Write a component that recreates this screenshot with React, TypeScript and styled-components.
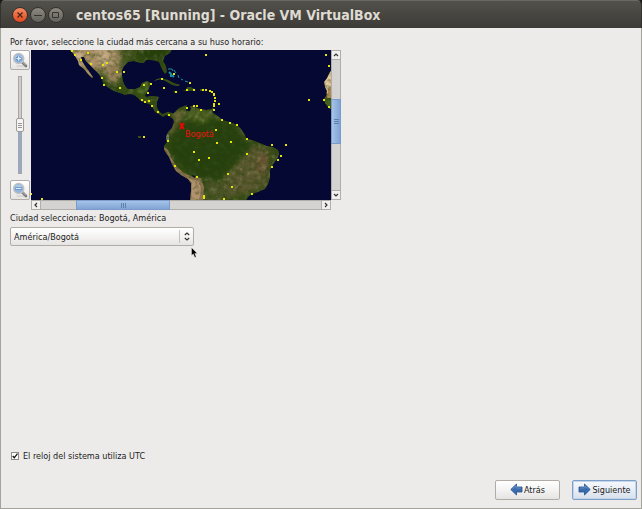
import React, { useState } from "react";
import styled, { createGlobalStyle, css } from "styled-components";

const GlobalStyle = createGlobalStyle`
  * { box-sizing: border-box; }
  body {
    margin: 0;
    background: #edebea;
    color: #1c1c1c;
    font: 9px/12px "DejaVu Sans Condensed", "DejaVu Sans", sans-serif;
  }
  button, input, select { font: inherit; color: inherit; margin: 0; }
`;

const Window = styled.div`
  min-height: 100vh;
  display: flex;
  flex-direction: column;
  background: #1a1917;
`;

const TitleBar = styled.header`
  height: 28px;
  display: flex;
  align-items: center;
  gap: 2px;
  padding: 0 11px;
  border: 1px solid #33322e;
  border-top-color: #6a6861;
  border-bottom: 0;
  border-radius: 5px 5px 0 0;
  background: linear-gradient(#53514b, #3c3b37);
`;

const WindowButton = styled.button<{ $close?: boolean }>`
  width: 16px;
  height: 16px;
  padding: 0;
  border: 1px solid #33322e;
  border-radius: 50%;
  display: grid;
  place-items: center;
  background: ${(p) =>
    p.$close
      ? "linear-gradient(#f58a63, #e0491d)"
      : "linear-gradient(#8b8980, #64625b)"};
  svg { display: block; }
`;

const Title = styled.h1`
  margin: 0 0 0 10px;
  color: #dfdbd2;
  font: bold 14px/20px "DejaVu Sans Condensed", "DejaVu Sans", sans-serif;
  white-space: nowrap;
`;

const Body = styled.main`
  flex: 1;
  display: flex;
  flex-direction: column;
  align-items: flex-start;
  padding: 8px 4px 8px 9px;
  border: 1px solid #a5a19b;
  border-top: 0;
  background: #edebea;
`;

const Caption = styled.p`
  margin: 0;
`;

const MapPanel = styled.section`
  display: grid;
  grid-template-columns: 20px auto;
  gap: 1px;
  margin: 2px 0;
`;

const ZoomColumn = styled.div`
  display: flex;
  flex-direction: column;
  align-items: center;
  justify-content: space-between;
  height: 150px;
`;

const buttonFace = css`
  border: 1px solid #b1aca6;
  border-radius: 2px;
  background: linear-gradient(#ffffff, #f4f3f2 50%, #e6e4e2);
`;

const ZoomButton = styled.button`
  ${buttonFace}
  width: 20px;
  height: 20px;
  padding: 0;
  display: grid;
  place-items: center;
`;

const ZoomSlider = styled.input`
  writing-mode: vertical-lr;
  direction: rtl;
  appearance: none;
  width: 10px;
  height: 98px;
  background: transparent;
  &::-webkit-slider-runnable-track {
    width: 4px;
    height: 100%;
    border: 1px solid #a9a6a2;
    background: linear-gradient(#cfcdcb 50%, #8cacd6 50%);
  }
  &::-webkit-slider-thumb {
    appearance: none;
    width: 8px;
    height: 14px;
    margin-left: -3px;
    border: 1px solid #a09c97;
    border-radius: 2px;
    background:
      linear-gradient(#999 1px, transparent 1px 2px, #999 2px 3px, transparent 3px 4px, #999 4px) center / 4px 5px no-repeat,
      #f6f5f4;
  }
`;

const MapFrame = styled.div`
  display: grid;
  grid-template-columns: 300px 10px;
  grid-template-rows: 150px 10px;
`;

const MapCanvas = styled.svg`
  display: block;
  width: 300px;
  height: 150px;
  background: #040833;
`;

const ScrollBar = styled.div<{ $vertical?: boolean }>`
  display: flex;
  flex-direction: ${(p) => (p.$vertical ? "column" : "row")};
  border: 1px solid #b1aeaa;
  border-radius: 2px;
  background: #d5d3d1;
`;

const ScrollArrow = styled.button`
  flex: 0 0 8px;
  min-width: 8px;
  padding: 0;
  border: 0;
  display: grid;
  place-items: center;
  background: #f1f0ef;
  box-shadow: 0 0 0 1px #b1aeaa;
`;

const ScrollGap = styled.div<{ $grow: number }>`
  flex: ${(p) => p.$grow} 1 0;
`;

const ScrollThumb = styled.div<{ $grow: number; $vertical?: boolean }>`
  flex: ${(p) => p.$grow} 1 0;
  display: grid;
  place-items: center;
  background: linear-gradient(${(p) => (p.$vertical ? "to right, " : "")}#a6c3e8, #80a4d4);
  box-shadow: 0 0 0 1px #7b9ccb;
`;

const Grip = styled.span<{ $vertical?: boolean }>`
  width: 5px;
  height: 5px;
  background: repeating-linear-gradient(
    ${(p) => (p.$vertical ? "to bottom" : "to right")},
    #5c80b1 0 1px, transparent 1px 2px
  );
`;

const SelectBox = styled.div`
  display: grid;
  width: 184px;
  margin-top: 3px;
  align-items: center;
  > * { grid-area: 1 / 1; }
`;

const CitySelect = styled.select`
  ${buttonFace}
  appearance: none;
  width: 100%;
  height: 19px;
  padding: 0 18px 0 3px;
`;

const SelectArrows = styled.span`
  justify-self: end;
  display: grid;
  place-items: center;
  width: 15px;
  height: 13px;
  border-left: 1px solid #c4c1bd;
  pointer-events: none;
`;

const UtcLabel = styled.label`
  display: flex;
  align-items: center;
  gap: 4px;
  margin: auto 0 18px 1px;
`;

const UtcBox = styled.input`
  appearance: none;
  width: 8px;
  height: 8px;
  border: 1px solid #8f8c88;
  background: #fff;
  &:checked {
    background: #fff url("data:image/svg+xml,%3Csvg xmlns='http://www.w3.org/2000/svg' viewBox='0 0 6 6'%3E%3Cpath d='M.7 3l1.6 1.8L5.5.6' fill='none' stroke='%23111' stroke-width='1.3'/%3E%3C/svg%3E") center / 6px 6px no-repeat;
  }
`;

const Footer = styled.footer`
  align-self: stretch;
  display: flex;
  justify-content: flex-end;
  gap: 12px;
`;

const NavButton = styled.button<{ $primary?: boolean }>`
  ${buttonFace}
  width: 65px;
  height: 20px;
  padding: 0 0 1px;
  display: flex;
  align-items: center;
  justify-content: center;
  gap: 1px;
  ${(p) =>
    p.$primary &&
    css`
      border-color: #7d9fc9;
      background: linear-gradient(#f5f8fc, #e9eef5 50%, #d6dfeb);
      box-shadow: inset 0 0 0 1px #c5d5e9;
    `}
`;

const Pointer = styled.svg`
  position: absolute;
  left: 191px;
  top: 247px;
  pointer-events: none;
`;

const cities: [number, number][] = [
  [71, 51], [74, 55], [80, 60], [87, 53], [90, 64], [102, 65], [106, 63], [116, 72],
  [123, 72], [101, 78], [103, 85], [119, 88], [143, 85], [150, 84], [147, 93], [161, 79],
  [173, 74], [189, 83], [163, 88], [175, 92], [186, 90], [193, 90], [202, 90], [205, 90],
  [209, 91], [211, 92], [213, 94], [213, 95], [214, 98], [214, 101], [213, 104], [213, 106],
  [213, 110], [218, 104], [205, 55], [141, 100], [144, 102], [148, 101], [151, 106],
  [157, 112], [168, 115], [186, 108], [193, 106], [196, 106], [200, 110], [221, 120],
  [229, 123], [236, 125], [215, 130], [216, 143], [230, 142], [246, 139], [193, 152],
  [198, 160], [208, 158], [246, 154], [271, 145], [285, 145], [280, 156], [277, 160],
  [271, 167], [174, 166], [196, 177], [227, 174], [231, 187], [251, 194], [203, 196],
  [203, 198], [223, 199], [167, 141], [325, 55], [328, 66], [308, 100], [323, 100],
  [328, 107], [143, 137], [41, 199], [30, 194],
];

const land = {
  north:
    "M69 50L72 53L75 57L78 62L79 66L84 70L88 75L92 79L93 78L90 74L88 71L85 67L82 62L81 58L84 58L86 62L90 66L94 70L98 74L102 80L103 84L105 86L109 89L114 92L120 94L125 96L130 95L134 96L138 99L141 102L146 104L151 106L153 109L155 113L159 115L163 118L166 116L169 117L173 120L176 116L172 114L168 113L162 115L159 112L157 108L157 103L159 98L154 97L150 97L146 98L145 96L147 93L149 89L151 84L147 82L142 84L140 88L135 90L128 90L125 87L123 82L122 76L122 71L124 67L128 63L134 62L140 64L144 64L146 61L151 61L156 62L159 63L161 68L163 72L165 75L167 73L166 67L163 62L165 57L170 54L172 50Z",
  south:
    "M172 115L175 113L179 109L184 107L187 106L187 111L189 113L191 110L190 107L194 107L197 109L201 110L206 111L212 110L213 114L218 117L222 121L230 123L237 126L241 130L245 136L246 140L252 141L257 143L262 145L267 147L273 148L278 151L279 155L277 160L273 165L270 171L270 178L268 185L265 190L258 193L252 195L248 198L246 202L190 202L191 192L191 184L188 180L181 176L176 172L172 165L169 158L164 151L164 147L167 143L166 138L168 133L172 129L174 123Z",
  africa: "M332 70L329 74L327 79L324 83L325 88L327 92L326 97L324 100L325 104L329 109L332 111Z",
  islands:
    "M154 82L157 80L162 79L168 81L174 84L180 86L178 87L172 86L167 83L161 80ZM173 92L176 92L178 93L175 94ZM182 91L186 91L187 88L191 88L196 91L190 92L187 92ZM200 90L204 90L204 92L200 92ZM212 109h2v2h-2zM138 137h3v2h-3z",
};

function WorldMap() {
  return (
    <MapCanvas viewBox="31 51 300 150" role="img" aria-label="Mapa de husos horarios">
      <defs>
        <filter id="soft" x="-20%" y="-20%" width="140%" height="140%">
          <feGaussianBlur stdDeviation="2.2" />
        </filter>
        <filter id="grain" x="0" y="0" width="100%" height="100%">
          <feTurbulence type="fractalNoise" baseFrequency="0.22" numOctaves="4" seed="8" />
          <feColorMatrix values="0 0 0 0 0.02  0 0 0 0 0.05  0 0 0 0 0  2.6 0 0 0 -1.1" />
        </filter>
        <filter id="glint" x="0" y="0" width="100%" height="100%">
          <feTurbulence type="fractalNoise" baseFrequency="0.18" numOctaves="4" seed="21" />
          <feColorMatrix values="0 0 0 0 0.75  0 0 0 0 0.66  0 0 0 0 0.42  0 2.4 0 0 -1.15" />
        </filter>
        <clipPath id="land">
          {Object.values(land).map((d) => (
            <path key={d} d={d} />
          ))}
        </clipPath>
      </defs>
      <g clipPath="url(#land)">
        <rect x="31" y="51" width="300" height="150" fill="#364c16" />
        <g filter="url(#soft)">
          <path fill="#a88e68" d="M64 45H122L119 60L122 74L117 84L110 83L100 69L92 82L76 70Z" />
          <path fill="#c4a884" d="M76 48L84 56L80 63L74 58ZM94 53L108 51L112 65L104 68Z" />
          <path fill="#8f7b52" d="M106 64L119 66L119 80L113 82Z" />
          <path fill="#2c4512" d="M100 82L118 89L124 96L118 98L104 90Z" />
          <path fill="#4d5a26" d="M118 48H134L128 62L120 72Z" />
          <path fill="#28400f" d="M136 48H170L164 60H142Z" />
          <path fill="#3a5a18" d="M140 84h11v10l-14 4z" />
          <path fill="#4d6123" d="M184 110L206 110L213 117L204 124L188 121Z" />
          <path fill="#766a3c" d="M176 112L183 112L180 124L174 136L169 134Z" />
          <path fill="#7d7144" d="M238 127L244 134L246 139L241 138Z" />
          <path fill="#59572f" d="M250 146L270 150L268 186L250 194L228 198L222 182L236 166Z" />
          <path fill="#6e5638" d="M258 156L267 156L264 172L256 174Z" />
          <path fill="#384a18" d="M274 146L282 150L274 170L268 186L266 176L270 162Z" />
          <path fill="#4a5226" d="M206 180L228 182L226 204H204Z" />
        </g>
        <rect x="31" y="51" width="300" height="150" filter="url(#glint)" opacity="0.25" />
        <path
          fill="#223e0a"
          opacity="0.7"
          filter="url(#soft)"
          d="M176 126L186 122L204 126L218 120L238 126L246 140L252 148L240 160L228 170L220 180L202 180L188 174L174 160L168 144Z"
        />
        <path fill="#8d7453" d="M163 147L168 151L172 160L177 168L184 174L193 178L201 179L204 188L203 202H189L191 185L182 178L174 172L169 161Z" />
        <path fill="#b3936f" d="M187 178L195 181L199 183L201 190L199 202H191L192 184Z" />
        <path fill="#7a8170" d="M166 134l3 2v5l-3 2z" />
        <path fill="#e5c8a0" d="M332 70L327 79L324 83L326 94L332 97Z" />
        <path fill="#c08f5f" d="M328 90L332 89V99L327 99Z" />
        <path fill="#47621f" d="M324 101L332 100V112H326Z" />
        <rect x="31" y="51" width="300" height="150" filter="url(#grain)" opacity="0.45" />
      </g>
      <path fill="#050a35" d="M186 107l2 1v3l-2 1zM192 176l3 1v2l-2-1z" />
      <g fill="none" stroke="#1c8f9f" strokeWidth="1">
        <path d="M169 73l2 2v3M172 76l2 2" strokeWidth="2" />
        <path d="M168 70l4 0 1 2M174 71l2 3M178 76l1 3M181 80l2 1M185 82l3 1" />
      </g>
      <g fill="#e6e600">
        {cities.map(([x, y]) => (
          <rect key={`${x}-${y}`} x={x} y={y} width="2" height="2" />
        ))}
      </g>
      <path d="M180 124L184 130M184 124L180 130" stroke="#f00" strokeWidth="1.6" fill="none" />
      <text x="185" y="138" fill="#e8120c" fontSize="9">Bogotá</text>
    </MapCanvas>
  );
}

function Magnifier({ plus }: { plus?: boolean }) {
  return (
    <svg width="16" height="16" viewBox="0 0 16 16" aria-hidden="true">
      <ellipse cx="9" cy="14" rx="5" ry="1" fill="#d9d7d4" />
      <path d="M10 10L14 14" stroke="#77797a" strokeWidth="2.6" strokeLinecap="round" />
      <path d="M10.5 10L13.6 13" stroke="#b9bbbc" strokeWidth="1" strokeLinecap="round" />
      <circle cx="6.7" cy="6.5" r="5" fill="#8fb5e0" stroke="#c0c1c0" strokeWidth="1.5" />
      <path d="M2.8 6a4 4 0 0 1 7.8 0z" fill="#b0cdec" />
      <path d={plus ? "M4 6.5h5.4M6.7 3.8v5.4" : "M3.6 6.5h6.2"} stroke="#5383be" strokeWidth="3" />
      <path d={plus ? "M4.4 6.5h4.6M6.7 4.2v4.6" : "M4 6.5h5.4"} stroke="#e4eefa" strokeWidth="1.4" />
    </svg>
  );
}

function Chevron({ d }: { d: string }) {
  return (
    <svg width="6" height="6" viewBox="0 0 6 6" aria-hidden="true">
      <path d={d} fill="none" stroke="#333" strokeWidth="1.2" />
    </svg>
  );
}

function ArrowIcon({ back }: { back?: boolean }) {
  return (
    <svg width="13" height="13" viewBox="0 0 13 13" aria-hidden="true">
      <path
        d={back ? "M.8 6.5L6.5 1V4H12V9H6.5V12Z" : "M12.2 6.5L6.5 1V4H1V9H6.5V12Z"}
        fill="#3b6cad"
        stroke="#24508c"
        strokeWidth="0.8"
        strokeLinejoin="round"
      />
      <path d={back ? "M2.5 6L6 2.7V5H11" : "M10.5 6L7 2.7V5H2"} fill="none" stroke="#6f98cb" strokeWidth="0.8" />
    </svg>
  );
}

export default function App() {
  const [zoom, setZoom] = useState(50);
  const [utc, setUtc] = useState(true);
  const step = (by: number) => setZoom((z) => Math.max(0, Math.min(100, z + by)));

  return (
    <Window>
      <GlobalStyle />
      <TitleBar>
        <WindowButton $close aria-label="Close">
          <svg width="8" height="8"><path d="M1.5 1.5l5 5M6.5 1.5l-5 5" stroke="#4a2414" strokeWidth="1.3" /></svg>
        </WindowButton>
        <WindowButton aria-label="Minimize">
          <svg width="8" height="8"><path d="M0 4.5h8" stroke="#35342f" /></svg>
        </WindowButton>
        <WindowButton aria-label="Maximize">
          <svg width="8" height="8"><path d="M.5 1.5h6v5h-6z" fill="none" stroke="#35342f" /></svg>
        </WindowButton>
        <Title>centos65 [Running] - Oracle VM VirtualBox</Title>
      </TitleBar>
      <Body>
        <Caption>Por favor, seleccione la ciudad más cercana a su huso horario:</Caption>
        <MapPanel>
          <ZoomColumn>
            <ZoomButton aria-label="Acercar" onClick={() => step(10)}><Magnifier plus /></ZoomButton>
            <ZoomSlider
              type="range"
              aria-label="Zoom"
              value={zoom}
              onChange={(e) => setZoom(Number(e.target.value))}
            />
            <ZoomButton aria-label="Alejar" onClick={() => step(-10)}><Magnifier /></ZoomButton>
          </ZoomColumn>
          <MapFrame>
            <WorldMap />
            <ScrollBar $vertical>
              <ScrollArrow aria-label="Arriba"><Chevron d="M1 4L3 2L5 4" /></ScrollArrow>
              <ScrollGap $grow={41} />
              <ScrollThumb $grow={43} $vertical><Grip $vertical /></ScrollThumb>
              <ScrollGap $grow={48} />
              <ScrollArrow aria-label="Abajo"><Chevron d="M1 2L3 4L5 2" /></ScrollArrow>
            </ScrollBar>
            <ScrollBar>
              <ScrollArrow aria-label="Izquierda"><Chevron d="M4 1L2 3L4 5" /></ScrollArrow>
              <ScrollGap $grow={37} />
              <ScrollThumb $grow={92}><Grip /></ScrollThumb>
              <ScrollGap $grow={153} />
              <ScrollArrow aria-label="Derecha"><Chevron d="M2 1L4 3L2 5" /></ScrollArrow>
            </ScrollBar>
          </MapFrame>
        </MapPanel>
        <Caption>Ciudad seleccionada: Bogotá, América</Caption>
        <SelectBox>
          <CitySelect aria-label="Ciudad" defaultValue="bogota">
            <option value="bogota">América/Bogotá</option>
          </CitySelect>
          <SelectArrows>
            <svg width="6" height="9" viewBox="0 0 6 9" aria-hidden="true">
              <path d="M.8 3L3 1L5.2 3M.8 6L3 8L5.2 6" fill="none" stroke="#333" strokeWidth="1.2" />
            </svg>
          </SelectArrows>
        </SelectBox>
        <UtcLabel>
          <UtcBox type="checkbox" checked={utc} onChange={(e) => setUtc(e.target.checked)} />
          El reloj del sistema utiliza UTC
        </UtcLabel>
        <Footer>
          <NavButton><ArrowIcon back />Atrás</NavButton>
          <NavButton $primary><ArrowIcon />Siguiente</NavButton>
        </Footer>
      </Body>
      <Pointer width="8" height="12" viewBox="0 0 8 12" aria-hidden="true">
        <path d="M.5 .5V8.5L2.3 7L3.8 10.5L5.2 9.8L3.8 6.5H6.3Z" fill="#000" stroke="#fff" strokeWidth="0.4" />
      </Pointer>
    </Window>
  );
}
